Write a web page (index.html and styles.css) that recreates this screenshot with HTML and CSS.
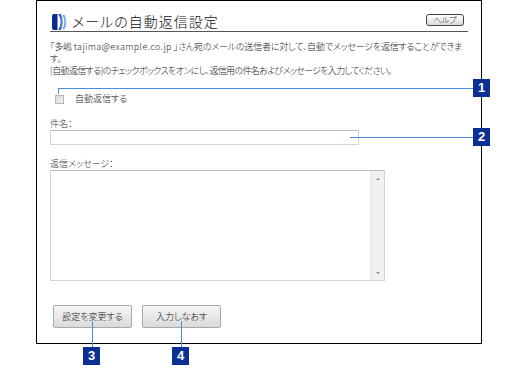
FILE: index.html
```html
<!DOCTYPE html>
<html lang="ja">
<head>
<meta charset="utf-8">
<link rel="stylesheet" href="styles.css">
</head>
<body>
<div class="page">
  <div class="frame">
    <div class="header">
      <svg class="title-icon" width="16" height="16" viewBox="0 0 16 16">
        <defs>
          <linearGradient id="g1" x1="0" y1="0" x2="1" y2="0">
            <stop offset="0" stop-color="#1c44b8"/>
            <stop offset="1" stop-color="#5a8ce6"/>
          </linearGradient>
          <linearGradient id="g2" x1="0" y1="0" x2="1" y2="0">
            <stop offset="0" stop-color="#4a7ee0"/>
            <stop offset="1" stop-color="#9fc0f2"/>
          </linearGradient>
        </defs>
        <path d="M2,0 H5.5 V16 H2 Q0,16 0,14 V2 Q0,0 2,0 Z" fill="#0b2a8c"/>
        <path d="M6.3,0 Q11,8 6.3,16 L9,16 Q12.6,8 9,0 Z" fill="url(#g1)"/>
        <path d="M10.6,1 Q14.2,8 10.6,15 L12.6,15 Q16,8 12.6,1 Z" fill="url(#g2)"/>
      </svg>
      <h1 class="title">メールの自動返信設定</h1>
      <span class="help">ヘルプ</span>
    </div>
    <p class="intro"><span class="line1">「多嶋 <span class="latin">tajima@example.co.jp</span> 」さん宛のメールの送信者に対して、自動でメッセージを返信することができま</span><br>す。<br><span class="line3">[自動返信する]のチェックボックスをオンにし、返信用の件名およびメッセージを入力してください。</span></p>
    <label class="check-row"><span class="checkbox"></span><span class="check-label">自動返信する</span></label>
    <div class="field-label">件名：</div>
    <div class="input"></div>
    <div class="field-label">返信メッセージ：</div>
    <div class="textarea">
      <div class="scrollbar">
        <span class="arrow up"></span>
        <span class="arrow down"></span>
      </div>
    </div>
    <div class="buttons">
      <span class="btn">設定を変更する</span>
      <span class="btn">入力しなおす</span>
    </div>
  </div>

  <div class="line l1h"></div>
  <div class="line l1v"></div>
  <div class="badge b1">1</div>
  <div class="line l2h"></div>
  <div class="badge b2">2</div>
  <div class="line l3v"></div>
  <div class="badge b3">3</div>
  <div class="line l4v"></div>
  <div class="badge b4">4</div>
</div>
</body>
</html>
```
FILE: styles.css
```css
html, body {
  margin: 0;
  padding: 0;
  background: #fff;
}
body {
  font-family: "Noto Sans CJK JP", "Noto Sans", sans-serif;
  font-feature-settings: "palt";
  font-weight: 300;
  color: #222;
  width: 510px;
  height: 379px;
  overflow: hidden;
}
.page {
  position: relative;
  width: 510px;
  height: 379px;
}
.frame {
  box-sizing: border-box;
  margin-left: 36px;
  width: 446px;
  height: 344px;
  border: 1px solid #000;
  padding: 0 13px 0 13px;
  display: flex;
  flex-direction: column;
  align-items: flex-start;
}
.header {
  align-self: stretch;
  margin-top: 11px;
  height: 19px;
  border-bottom: 1px solid #555;
  display: flex;
  align-items: center;
}
.title-icon {
  margin-left: 2px;
  margin-right: 4px;
  flex: none;
}
.title {
  margin: 0;
  font-size: 14px;
  font-weight: 300;
  letter-spacing: 1px;
  color: #111;
  line-height: 19px;
  flex: 1;
}
.help {
  box-sizing: border-box;
  width: 38px;
  height: 12px;
  margin-right: 4px;
  margin-top: -3px;
  border: 1px solid #444;
  border-radius: 3px;
  background: linear-gradient(#ffffff, #dcdcdc);
  font-size: 8px;
  line-height: 10px;
  text-align: center;
  color: #333;
}
.intro {
  margin: 9px 0 0 0;
  font-size: 9px;
  line-height: 12px;
  white-space: nowrap;
}
.line1 { letter-spacing: -0.2px; }
.latin { letter-spacing: 0.4px; }
.line3 { letter-spacing: -0.65px; }
.check-row {
  margin-top: 16px;
  height: 12px;
  display: flex;
  align-items: center;
}
.checkbox {
  box-sizing: border-box;
  width: 9px;
  height: 9px;
  margin-left: 5px;
  border: 1px solid #b8b8b8;
  background: linear-gradient(135deg, #d8d8d8, #f4f4f4);
}
.check-label {
  margin-left: 11px;
  font-size: 9px;
  line-height: 12px;
}
.field-label {
  margin-top: 13px;
  font-size: 9px;
  line-height: 12px;
  color: #333;
}
.input {
  box-sizing: border-box;
  width: 309px;
  height: 15px;
  border: 1px solid #d4d4d4;
  border-top-color: #bdbdbd;
  background: #fff;
}
.textarea {
  box-sizing: border-box;
  width: 335px;
  height: 111px;
  border: 1px solid #d4d4d4;
  border-top-color: #bdbdbd;
  background: #fff;
  display: flex;
  justify-content: flex-end;
}
.scrollbar {
  width: 13px;
  background: #f0f0f0;
  border-left: 1px solid #e8e8e8;
  display: flex;
  flex-direction: column;
  justify-content: space-between;
  align-items: center;
  padding: 7px 0 6px;
}
.arrow {
  width: 0;
  height: 0;
  border-left: 2px solid transparent;
  border-right: 2px solid transparent;
}
.arrow.up { border-bottom: 2px solid #888; }
.arrow.down { border-top: 2px solid #888; }
.buttons {
  margin-top: 24px;
  margin-left: 3px;
  display: flex;
  gap: 10px;
}
.btn {
  box-sizing: border-box;
  width: 79px;
  height: 23px;
  border: 1px solid #a8a8a8;
  border-radius: 2px;
  background: linear-gradient(#f6f6f6, #dadada);
  font-size: 9px;
  line-height: 21px;
  text-align: center;
  color: #222;
}
.line {
  position: absolute;
  background: #4a8ee0;
}
.l1h { left: 58px; top: 88px; width: 416px; height: 1px; }
.l1v { left: 58px; top: 88px; width: 1px; height: 6px; }
.l2h { left: 350px; top: 137px; width: 124px; height: 1px; }
.l3v { left: 92px; top: 321px; width: 1px; height: 27px; }
.l4v { left: 181px; top: 321px; width: 1px; height: 27px; }
.badge {
  position: absolute;
  width: 17px;
  height: 18px;
  background: #0c2f96;
  color: #fff;
  font-family: "Liberation Sans", Arial, sans-serif;
  font-weight: bold;
  font-size: 13px;
  line-height: 18px;
  text-align: center;
}
.b1 { left: 473px; top: 79px; }
.b2 { left: 473px; top: 128px; }
.b3 { left: 83px; top: 347px; }
.b4 { left: 172px; top: 347px; }
```
